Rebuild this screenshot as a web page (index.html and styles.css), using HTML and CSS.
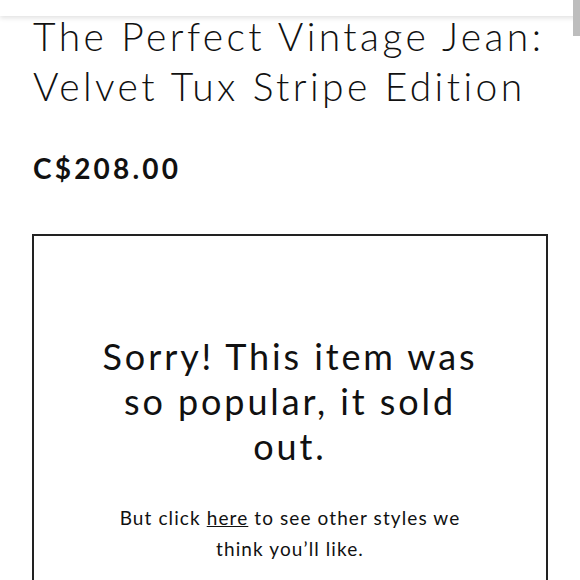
FILE: index.html
```html
<!DOCTYPE html>
<html>
<head>
<meta charset="utf-8">
<link rel="stylesheet" href="styles.css">
</head>
<body>
<div class="topbar"></div>
<div class="scroll-thumb"></div>
<main class="product">
  <h1 class="title">The Perfect Vintage Jean: Velvet Tux Stripe Edition</h1>
  <div class="price">C$208.00</div>
  <section class="soldout">
    <h2 class="soldout-head">Sorry! This item was so popular, it sold out.</h2>
    <p class="soldout-text">But click <a href="#" class="link">here</a> to see other styles we think you’ll like.</p>
  </section>
</main>
</body>
</html>
```

FILE: styles.css
```css
html, body {
  margin: 0;
  padding: 0;
  background: #fff;
  overflow: hidden;
}
body {
  font-family: Lato, "Noto Sans", sans-serif;
  color: #111;
  width: 580px;
  height: 580px;
}
.topbar {
  position: fixed;
  top: 0;
  left: 0;
  right: 0;
  height: 16px;
  background: #fff;
  box-shadow: 0 2px 5px rgba(0,0,0,0.12);
  z-index: 2;
}
.scroll-thumb {
  position: fixed;
  top: 0;
  right: 0;
  width: 7px;
  height: 36px;
  background: #bdbdbd;
  z-index: 3;
}
.product {
  padding: 11px 20px 0 33px;
}
.title {
  margin: 0;
  width: 527px;
  font-weight: 300;
  font-size: 39px;
  line-height: 50px;
  letter-spacing: 3.4px;
}
.price {
  margin-top: 40px;
  font-weight: 700;
  font-size: 28px;
  line-height: 34px;
  letter-spacing: 3.2px;
}
.soldout {
  margin: 49px 0 0 -1px;
  border: 2px solid #222;
  width: 512px;
  padding: 98px 0 80px;
  text-align: center;
  box-sizing: content-box;
}
.soldout-head {
  margin: 0 auto;
  width: 390px;
  font-weight: 400;
  font-size: 36px;
  line-height: 45px;
  letter-spacing: 2.9px;
}
.soldout-text {
  margin: 33px auto 0;
  width: 350px;
  font-size: 19px;
  line-height: 31px;
  letter-spacing: 1.1px;
}
.link {
  color: inherit;
  text-decoration: underline;
}
```
